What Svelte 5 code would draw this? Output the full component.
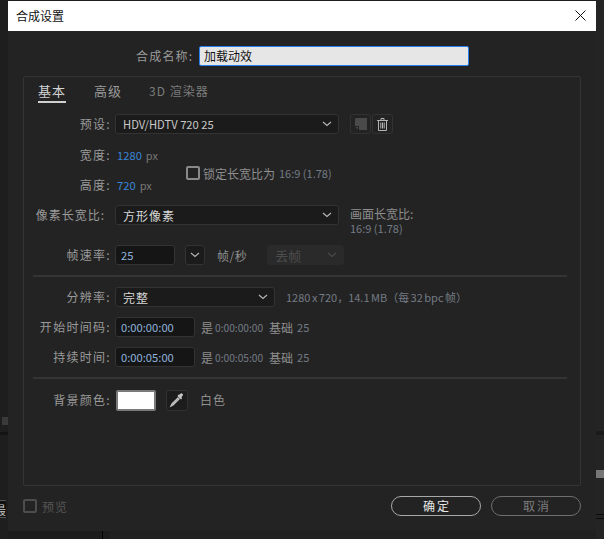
<script lang="ts">
  const name = "加载动效";
  const timeRows = [
    { label: "开始时间码:", value: "0:00:00:00", note: "0:00:00:00" },
    { label: "持续时间:", value: "0:00:05:00", note: "0:00:05:00" },
  ];
</script>

{#snippet chevron()}
  <svg class="chev" width="10" height="6" viewBox="0 0 10 6"><path d="M1 1l4 3.5L9 1" fill="none" stroke="currentColor" stroke-width="1.1" /></svg>
{/snippet}

<div class="backdrop">
  <div class="side left">
    <span class="chip"></span>
    <span class="band b1"></span>
    <span class="peek">最</span>
  </div>

  <div class="dialog">
    <header class="titlebar">
      <span class="title">合成设置</span>
      <svg class="close" width="11" height="11" viewBox="0 0 11 11"><path d="M.5.5l10 10M10.5.5l-10 10" stroke="#111" stroke-width="1" /></svg>
    </header>

    <div class="body">
      <div class="name-row">
        <span class="label">合成名称:</span>
        <div class="name-input">{name}</div>
      </div>

      <section class="panel">
        <nav class="tabs">
          <span class="tab active">基本</span>
          <span class="tab">高级</span>
          <span class="tab dim">3D 渲染器</span>
        </nav>

        <div class="row preset">
          <span class="label">预设:</span>
          <div class="select wide">HDV/HDTV 720 25 {@render chevron()}</div>
          <div class="icon-btn first">
            <svg width="12" height="12" viewBox="0 0 12 12"><path d="M1 0H12V12H4V8H0V1z" fill="#4a4a4a" /><path d="M.5 9H3v2.500z" fill="#4a4a4a" /></svg>
          </div>
          <div class="icon-btn">
            <svg width="12" height="13" viewBox="0 0 12 13" fill="none" stroke="#b4b4b4"><path d="M0 2.500h11M4 2.500V.5h3v2M1.500 2.500v10h8v-10M3.800 4.500v6M5.500 4.500v6M7.200 4.500v6" /></svg>
          </div>
        </div>

        <div class="dims">
          <div class="dim-col">
            <div class="row tight"><span class="label">宽度:</span><span class="num">1280</span><span class="unit">px</span></div>
            <div class="row tight"><span class="label">高度:</span><span class="num">720</span><span class="unit">px</span></div>
          </div>
          <div class="lock">
            <span class="check"></span>
            <span class="cjk">锁定长宽比为</span>
            <span class="info">16:9 (1.78)</span>
          </div>
        </div>

        <div class="row pixel">
          <span class="label">像素长宽比:</span>
          <div class="select wide zh">方形像素 {@render chevron()}</div>
          <div class="aspect">
            <span class="cjk">画面长宽比:</span>
            <span class="info">16:9 (1.78)</span>
          </div>
        </div>

        <div class="row fps">
          <span class="label">帧速率:</span>
          <div class="field short">25</div>
          <div class="drop">{@render chevron()}</div>
          <span class="cjk fps-unit">帧/秒</span>
          <div class="select disabled">丢帧 {@render chevron()}</div>
        </div>

        <hr />

        <div class="row res">
          <span class="label">分辨率:</span>
          <div class="select mid zh">完整 {@render chevron()}</div>
          <span class="info res-info">1280 x 720，14.1 MB（每 32 bpc 帧）</span>
        </div>

        {#each timeRows as t}
          <div class="row time">
            <span class="label">{t.label}</span>
            <div class="field tc">{t.value}</div>
            <span class="cjk is">是</span>
            <span class="info tc-note">{t.note}</span>
            <span class="cjk base">基础</span>
            <span class="info">25</span>
          </div>
        {/each}

        <hr class="second" />

        <div class="row bg">
          <span class="label">背景颜色:</span>
          <div class="swatch"></div>
          <div class="picker">
            <svg width="16" height="16" viewBox="0 0 16 16"><path d="M9.500 5.500L3 12l-1 2 2-1 6.500-6.500" fill="none" stroke="#c4c4c4" stroke-width="1.300" /><path d="M8.500 4l3.500 3.500 1-1-.5-1.500 1-1a1.500 1.500 0 0 0-2.200-2.200l-1 1L9.500 2.500z" fill="#c4c4c4" /></svg>
          </div>
          <span class="cjk white">白色</span>
        </div>
      </section>

      <footer class="footer">
        <div class="preview">
          <span class="check off"></span>
          <span class="cjk">预览</span>
        </div>
        <div class="actions">
          <span class="btn primary">确定</span>
          <span class="btn">取消</span>
        </div>
      </footer>
    </div>
  </div>

  <div class="side right">
    <span class="band b1"></span>
    <span class="band b2"></span>
    <span class="band b3"></span>
    <span class="band b4"></span>
  </div>

  <span class="under-line"></span>
  <span class="under-fill"></span>
</div>

<style>
  :global(body) {
    margin: 0;
    background: #1c1c1c;
  }

  .backdrop {
    width: 604px;
    height: 539px;
    position: relative;
    overflow: hidden;
    display: flex;
    align-items: flex-start;
    font-family: "Noto Sans CJK SC", "Noto Sans", sans-serif;
    font-size: 12px;
    color: #a0a0a0;
  }

  .side {
    width: 8px;
    height: 539px;
    position: relative;
    overflow: hidden;
    background: #1e1e1e;
    flex: none;
  }

  .side.right {
    background: #242424;
  }

  .band {
    position: absolute;
    left: 0;
    width: 8px;
    height: 3px;
    background: #151515;
  }

  .left .b1 { top: 432px; background: #141414; }
  .right .b1 { top: 431px; height: 4px; background: #1a1a1a; }
  .right .b2 { top: 470px; height: 8px; background: #777; }
  .right .b3 { top: 514px; height: 1px; background: #0c0c0c; }
  .right .b4 { top: 518px; height: 1px; background: #0c0c0c; }

  .chip {
    position: absolute;
    left: 2px;
    top: 417px;
    width: 6px;
    height: 8px;
    background: #3a3a3a;
  }

  .peek {
    position: absolute;
    left: -6px;
    top: 500px;
    height: 18px;
    line-height: 18px;
    color: #c8c8c8;
    font-size: 12px;
    box-sizing: border-box;
    border-top: 1px solid #555;
    border-bottom: 1px solid #555;
    background: #111;
  }

  .under-line {
    position: absolute;
    left: 102px;
    top: 531px;
    width: 1px;
    height: 8px;
    background: #000;
  }

  .under-fill {
    position: absolute;
    left: 110px;
    top: 531px;
    width: 486px;
    height: 8px;
    background: #202020;
  }

  .dialog {
    width: 588px;
    height: 530px;
    margin-top: 1px;
    flex: none;
    background: #232323;
    display: flex;
    flex-direction: column;
  }

  .titlebar {
    height: 30px;
    box-sizing: border-box;
    flex: none;
    background: #fff;
    display: flex;
    align-items: center;
    justify-content: space-between;
    padding: 0 10px 2px 8px;
    color: #111;
  }

  .title {
    font-size: 12px;
  }

  .body {
    flex: 1;
    display: flex;
    flex-direction: column;
    padding: 15px 15px 0;
  }

  .name-row {
    display: flex;
    align-items: center;
    margin-bottom: 10px;
    padding-left: 113px;
    height: 20px;
    gap: 6px;
  }

  .name-row .label {
    width: 57px;
    margin-right: 0;
    letter-spacing: 1.2px;
  }

  .name-input {
    width: 264px;
    height: 18px;
    line-height: 18px;
    padding-left: 4px;
    background: #e6e6e6;
    color: #111;
    border: 1px solid #2680eb;
    border-radius: 2px;
    font-size: 12px;
  }

  .panel {
    height: 408px;
    border: 1px solid #343434;
    border-radius: 2px;
    padding: 0 13px 0 9px;
  }

  .tabs {
    display: flex;
    gap: 28px;
    height: 25px;
    padding: 5px 0 0 5px;
    margin-bottom: 7px;
  }

  .tab {
    height: 19px;
    line-height: 17px;
    letter-spacing: 1px;
    font-size: 13px;
    white-space: pre;
    color: #9a9a9a;
  }

  .tab.active {
    color: #d4d4d4;
    border-bottom: 2px solid #d0d0d0;
  }

  .tab.dim {
    color: #7c7c7c;
    margin-left: -1px;
    font-size: 12px;
  }

  .row {
    display: flex;
    align-items: center;
    height: 20px;
  }

  .label {
    width: 78px;
    flex: none;
    margin-right: 4px;
    text-align: right;
    color: #9a9a9a;
    letter-spacing: 1.3px;
    white-space: nowrap;
    line-height: 20px;
  }

  .pixel .label {
    width: 72px;
    margin-right: 10px;
    letter-spacing: 1px;
  }

  .cjk {
    color: #8e8e8e;
    white-space: nowrap;
  }

  .select {
    height: 18px;
    line-height: 17px;
    background: #1b1b1b;
    border: 1px solid #333;
    border-radius: 3px;
    display: flex;
    align-items: center;
    justify-content: space-between;
    padding: 0 6px 0 7px;
    color: #c8c8c8;
    font-size: 11.2px;
  }

  .select.zh {
    font-size: 12px;
    letter-spacing: 1px;
    color: #d8d8d8;
  }

  .select.wide {
    width: 209px;
  }

  .select.mid {
    width: 145px;
  }

  .select.disabled {
    width: 62px;
    background: #2a2a2a;
    border-color: #2a2a2a;
    color: #4c4c4c;
    margin-left: 20px;
    font-size: 13px;
  }

  .chev {
    color: #b8b8b8;
    flex: none;
  }

  .disabled .chev {
    color: #4a4a4a;
  }

  .preset {
    margin-bottom: 11px;
  }

  .icon-btn {
    width: 19px;
    height: 18px;
    border: 1px solid #323232;
    border-radius: 3px;
    display: flex;
    align-items: center;
    justify-content: center;
  }

  .icon-btn.first {
    margin-left: 11px;
    margin-right: 1px;
  }

  .dims {
    display: flex;
    height: 60px;
  }

  .dim-col {
    display: flex;
    flex-direction: column;
    gap: 10px;
    width: 149px;
  }

  .dim-col .label {
    margin-right: 6px;
  }

  .num {
    color: #3a85d8;
    font-size: 11.2px;
    margin-right: 4px;
  }

  .unit,
  .info {
    color: #737b85;
    font-size: 11px;
    white-space: nowrap;
  }

  .unit {
    color: #777;
  }

  .lock {
    display: flex;
    align-items: center;
    gap: 3px;
    margin: 18px 0 0 4px;
    height: 20px;
  }

  .lock .info {
    margin-left: 1px;
  }

  .check {
    width: 10px;
    height: 10px;
    border: 2px solid #8a8a8a;
    border-radius: 2px;
    display: block;
    flex: none;
  }

  .check.off {
    border-color: #4d4d4d;
  }

  .aspect {
    display: flex;
    flex-direction: column;
    margin-left: 11px;
    margin-top: 11px;
    line-height: 15px;
  }

  .pixel {
    margin-bottom: 20px;
  }

  .field {
    height: 18px;
    line-height: 18px;
    background: #151515;
    border: 1px solid #333;
    border-radius: 3px;
    color: #8fb4dc;
    font-size: 11.2px;
    padding-left: 5px;
  }

  .field.short {
    width: 53px;
  }

  .field.tc {
    width: 73px;
  }

  .drop {
    width: 18px;
    height: 18px;
    margin-left: 10px;
    background: #1b1b1b;
    border: 1px solid #333;
    border-radius: 3px;
    display: flex;
    align-items: center;
    justify-content: center;
  }

  .fps-unit {
    margin-left: 12px;
    letter-spacing: 0.5px;
  }

  hr {
    border: 0;
    height: 2px;
    background: #343434;
    margin: 10px 0;
    width: 534px;
  }

  hr.second {
    margin-bottom: 11px;
  }

  .res-info {
    margin-left: 11px;
    word-spacing: -1px;
  }

  .time {
    margin-top: 10px;
  }

  .is {
    margin-left: 6px;
    margin-right: 2px;
  }

  .tc-note {
    font-size: 10.2px;
    margin-right: 6px;
  }

  .base {
    margin-right: 4px;
  }

  .swatch {
    width: 36px;
    height: 17px;
    background: #fff;
    border: 2px solid #7a7a7a;
    border-radius: 2px;
    margin-left: 1px;
  }

  .picker {
    width: 20px;
    height: 19px;
    margin-left: 10px;
    border: 1px solid #323232;
    border-radius: 3px;
    display: flex;
    align-items: center;
    justify-content: center;
    background: #1c1c1c;
  }

  .white {
    margin-left: 12px;
    letter-spacing: 1px;
    margin-top: -2px;
  }

  .footer {
    display: flex;
    justify-content: space-between;
    align-items: center;
    margin-top: 10px;
    height: 20px;
  }

  .preview {
    display: flex;
    align-items: center;
    gap: 5px;
  }

  .preview .cjk {
    color: #555;
    letter-spacing: 1px;
  }

  .actions {
    display: flex;
    gap: 10px;
  }

  .btn {
    width: 88px;
    height: 18px;
    line-height: 17px;
    border: 1px solid #6e6e6e;
    border-radius: 10px;
    text-align: center;
    color: #7e7e7e;
    letter-spacing: 2px;
    font-size: 12px;
    text-indent: 2px;
  }

  .btn.primary {
    border-color: #a8a8a8;
    color: #e8e8e8;
  }
</style>
